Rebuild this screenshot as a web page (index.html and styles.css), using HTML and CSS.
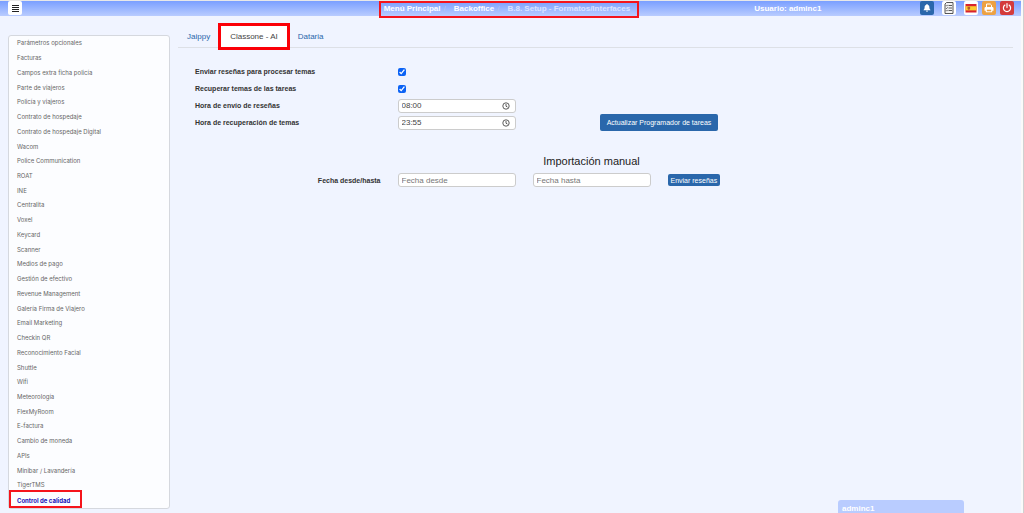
FILE: index.html
```
<!DOCTYPE html>
<html lang="es">
<head>
    <meta charset="utf-8">
    <title>Setup - Formatos/Interfaces</title>
    <link rel="stylesheet" href="styles.css">
</head>
<body>
    <header class="topbar">
        <div class="topbar-left">
            <button class="icon-btn" type="button" aria-label="Menú">
                <svg viewBox="0 0 14 14"><path d="M4 4.500h7M4 6.500h7M4 8.500h7M4 10.500h7" stroke="#222" stroke-width="1"/></svg>
            </button>
        </div>
        <nav class="breadcrumb">
            <a href="#">Menú Principal</a><span class="sep">/</span>
            <a href="#">Backoffice</a><span class="sep">/</span>
            <span class="current">B.8. Setup - Formatos/Interfaces</span>
        </nav>
        <div class="topbar-right">
            <span class="user">Usuario: adminc1</span>
            <div class="tools">
                <button class="icon-btn blue" type="button" aria-label="Avisos">
                    <svg viewBox="0 0 14 14"><path d="M7 3c.5 0 .7.3.7.7C9 4.1 9.4 5.200 9.400 6.500c0 1.300.5 1.900 1.200 2.700H3.400c.7-.8 1.200-1.400 1.200-2.700 0-1.300.4-2.400 1.700-2.800 0-.4.2-.7.7-.7zM6 9.700h2a1 1 0 0 1-2 0z" fill="#fff"/></svg>
                </button>
                <button class="icon-btn" type="button" aria-label="Tareas">
                    <svg viewBox="0 0 14 14"><path d="M4.500 1.500h6.500v11h-8v-9.500z" fill="#f4f4f4" stroke="#444" stroke-width=".9"/><path d="M6.500 4.500h3.500M6.500 7h3.500M6.500 9.500h3.500M4 4.500l.6.6 1-1.200M4 7l.6.6 1-1.200M4 9.500l.6.6 1-1.200" stroke="#333" stroke-width=".8" fill="none"/></svg>
                </button>
                <button class="icon-btn flag" type="button" aria-label="Idioma">
                    <svg viewBox="0 0 14 14"><path d="M1.500 3h11v8.500h-11z" fill="#d8232e"/><path d="M1.500 5.200h11v4.200h-11z" fill="#fccb2f"/><path d="M3.500 5.700h2.600v2.200l-1.300 1-1.300-1z" fill="#b5562b"/></svg>
                </button>
                <button class="icon-btn orange" type="button" aria-label="Imprimir">
                    <svg viewBox="0 0 14 14"><path d="M4.500 6.200V3h3.800l1.200 1.200v2" fill="none" stroke="#fff" stroke-width="1"/><path d="M3.300 6h7.400l.8.800v3h-1.300v1.500H3.800V9.800H2.500v-3z" fill="#fff"/><path d="M4.800 8.700h4.400v1.600H4.800z" fill="#eda142"/></svg>
                </button>
                <button class="icon-btn red" type="button" aria-label="Salir">
                    <svg viewBox="0 0 14 14"><path d="M4.900 4.100a3.600 3.600 0 1 0 4.200 0M7 2.600v4" fill="none" stroke="#fff" stroke-width="1.200" stroke-linecap="round"/></svg>
                </button>
            </div>
        </div>
    </header>

    <div class="layout">
        <nav class="sidebar">
            <a href="#">Parámetros opcionales</a>
            <a href="#">Facturas</a>
            <a href="#">Campos extra ficha policía</a>
            <a href="#">Parte de viajeros</a>
            <a href="#">Policía y viajeros</a>
            <a href="#">Contrato de hospedaje</a>
            <a href="#">Contrato de hospedaje Digital</a>
            <a href="#">Wacom</a>
            <a href="#">Police Communication</a>
            <a href="#">ROAT</a>
            <a href="#">INE</a>
            <a href="#">Centralita</a>
            <a href="#">Voxel</a>
            <a href="#">Keycard</a>
            <a href="#">Scanner</a>
            <a href="#">Medios de pago</a>
            <a href="#">Gestión de efectivo</a>
            <a href="#">Revenue Management</a>
            <a href="#">Galería Firma de Viajero</a>
            <a href="#">Email Marketing</a>
            <a href="#">Checkin QR</a>
            <a href="#">Reconocimiento Facial</a>
            <a href="#">Shuttle</a>
            <a href="#">Wifi</a>
            <a href="#">Meteorología</a>
            <a href="#">FlexMyRoom</a>
            <a href="#">E-factura</a>
            <a href="#">Cambio de moneda</a>
            <a href="#">APIs</a>
            <a href="#">Minibar / Lavandería</a>
            <a href="#">TigerTMS</a>
            <a href="#" class="selected">Control de calidad</a>
        </nav>

        <main class="content">
            <nav class="tabs">
                <a href="#">Jaippy</a>
                <a href="#" class="active">Classone - AI</a>
                <a href="#">Dataria</a>
            </nav>

            <form class="settings">
                <label for="sendReviews">Enviar reseñas para procesar temas</label>
                <div class="field"><input type="checkbox" id="sendReviews" checked></div>

                <label for="getTopics">Recuperar temas de las tareas</label>
                <div class="field"><input type="checkbox" id="getTopics" checked></div>

                <label for="sendTime">Hora de envío de reseñas</label>
                <div class="field time">
                    <input type="text" id="sendTime" value="08:00">
                    <svg viewBox="0 0 8 8"><circle cx="4" cy="4" r="3.200"/><path d="M4 2v2.200l1.500.9"/></svg>
                </div>

                <label for="topicTime">Hora de recuperación de temas</label>
                <div class="field time">
                    <input type="text" id="topicTime" value="23:55">
                    <svg viewBox="0 0 8 8"><circle cx="4" cy="4" r="3.200"/><path d="M4 2v2.200l1.500.9"/></svg>
                </div>
                <button class="btn btn-update" type="button">Actualizar Programador de tareas</button>
            </form>

            <h2>Importación manual</h2>
            <form class="import">
                <label for="dateFrom">Fecha desde/hasta</label>
                <input type="text" id="dateFrom" placeholder="Fecha desde">
                <input type="text" aria-label="Fecha hasta" placeholder="Fecha hasta">
                <button class="btn btn-send" type="button">Enviar reseñas</button>
            </form>
        </main>
    </div>

    <div class="chat">adminc1</div>
    <div class="scrollbar"></div>
</body>
</html>
```
FILE: styles.css
```
* {
    box-sizing: border-box;
}

body {
    margin: 0;
    min-height: 100vh;
    background: #f0f4ff;
    color: #333;
    font-family: "Liberation Sans", Arial, sans-serif;
    font-size: 8px;
    overflow: hidden;
}

a {
    color: #2a67ab;
    text-decoration: none;
}

/* top bar */
.topbar {
    display: grid;
    grid-template: 15px / 7fr 7fr 5fr;
    align-items: start;
    height: 16px;
    margin-right: 3px;
    padding: 0 7px 0 8px;
    border-top: 1px solid #e8e8e8;
    background: linear-gradient(#7a9fff, #b9ccff);
    color: #fff;
    font-weight: bold;
}

.icon-btn {
    display: block;
    width: 14px;
    height: 14px;
    padding: 0;
    border: 0;
    border-radius: 2px;
    background: #fff;
}

.icon-btn svg {
    display: block;
    width: 14px;
    height: 14px;
}

.icon-btn.blue {
    background: #2a67ab;
}

.icon-btn.orange {
    background: #eda142;
}

.icon-btn.red {
    background: #d43b3b;
}

.breadcrumb {
    justify-self: start;
    display: flex;
    align-items: center;
    height: 17px;
    padding: 0 7px 2px 3px;
    border: 2px solid #f5141b;
    white-space: nowrap;
}

.breadcrumb a {
    color: #fff;
}

.breadcrumb .sep {
    margin: 0 8px 0 3px;
    color: #b5c4ea;
    font-weight: normal;
}

.breadcrumb .current {
    color: #dbe3ff;
}

.topbar-right {
    display: flex;
    align-items: center;
    justify-content: space-between;
    padding-left: 5px;
}

.tools {
    display: flex;
    gap: 4px;
}

.tools .blue {
    margin-right: 4px;
}

.tools .flag {
    margin-left: 4px;
}

/* layout */
.layout {
    display: grid;
    grid-template-columns: 162px 1fr;
    gap: 8px;
    padding: 0 11px 0 8px;
}

.sidebar {
    display: flex;
    flex-direction: column;
    height: calc(100vh - 39px);
    margin-top: 19px;
    border: 1px solid #d5d8de;
    border-radius: 3px;
    background: #fcfdff;
    font-family: Inter, "Liberation Sans", sans-serif;
    font-size: 6px;
}

.sidebar a {
    display: flex;
    flex: 1;
    align-items: center;
    padding: 0 8px 1px;
    color: #666;
}

.sidebar .selected {
    align-self: flex-start;
    flex: 0 0 18px;
    margin-top: -3px;
    padding: 3px 10px 0 6px;
    border: 2px solid #f5141b;
    color: #1a13b8;
    font-weight: bold;
}

.content {
    margin-top: 6px;
}

.tabs {
    display: flex;
    align-items: center;
    gap: 2px;
    height: 26px;
    padding-top: 3px;
    border-bottom: 1px solid #dde0e6;
}

.tabs a {
    padding: 0 9px;
    line-height: 21px;
}

.tabs .active {
    background: #fff;
    color: #444;
    outline: 3px solid #fb0007;
}

/* forms */
.settings,
.import {
    display: grid;
    grid-template-columns: repeat(12, 1fr);
    column-gap: 17px;
    align-items: center;
    padding: 0 25px 0 17px;
}

.settings {
    grid-auto-rows: 17px;
    margin-top: 15px;
}

label {
    grid-column: 1 / span 3;
    font-size: 7px;
    font-weight: bold;
}

.field {
    grid-column: 4 / span 2;
    display: flex;
    align-items: center;
}

input[type="text"] {
    width: 100%;
    min-width: 0;
    height: 14px;
    padding: 0 3px;
    border: 1px solid #ccc;
    border-radius: 3px;
    background: #fff;
    color: #444;
    font-family: inherit;
    font-size: 8px;
}

input::placeholder {
    color: #777;
}

input[type="checkbox"] {
    width: 8px;
    height: 8px;
    margin: 0;
    accent-color: #0b62f5;
}

.time svg {
    width: 8px;
    height: 8px;
    margin-left: -14px;
    fill: none;
    stroke: #333;
    stroke-width: .8;
}

.btn {
    padding: 0;
    border: 0;
    border-radius: 2px;
    background: #2a67ab;
    color: #fff;
    font-family: inherit;
    font-size: 7px;
    white-space: nowrap;
}

.btn-update {
    grid-column: 7 / span 2;
    height: 17px;
}

h2 {
    margin: 24px 8px 6px 0;
    color: #222;
    font-size: 11px;
    font-weight: normal;
    line-height: 12px;
    text-align: center;
}

.import label {
    text-align: right;
}

.import input {
    grid-column-end: span 2;
}

.btn-send {
    grid-column-end: span 2;
    justify-self: start;
    height: 12px;
    padding: 0 3px;
}

/* chat box docked at the bottom of the window */
.chat {
    position: fixed;
    right: 60px;
    bottom: 0;
    width: 126px;
    height: 13px;
    padding: 0 4px;
    border-radius: 3px 3px 0 0;
    background: #b9ccff;
    color: #fff;
    font-weight: bold;
    line-height: 17px;
}

.scrollbar {
    position: fixed;
    top: 0;
    right: 0;
    width: 3px;
    height: 100%;
    border-right: 1px solid #d0d0d0;
    background: #fafafa;
}
```
